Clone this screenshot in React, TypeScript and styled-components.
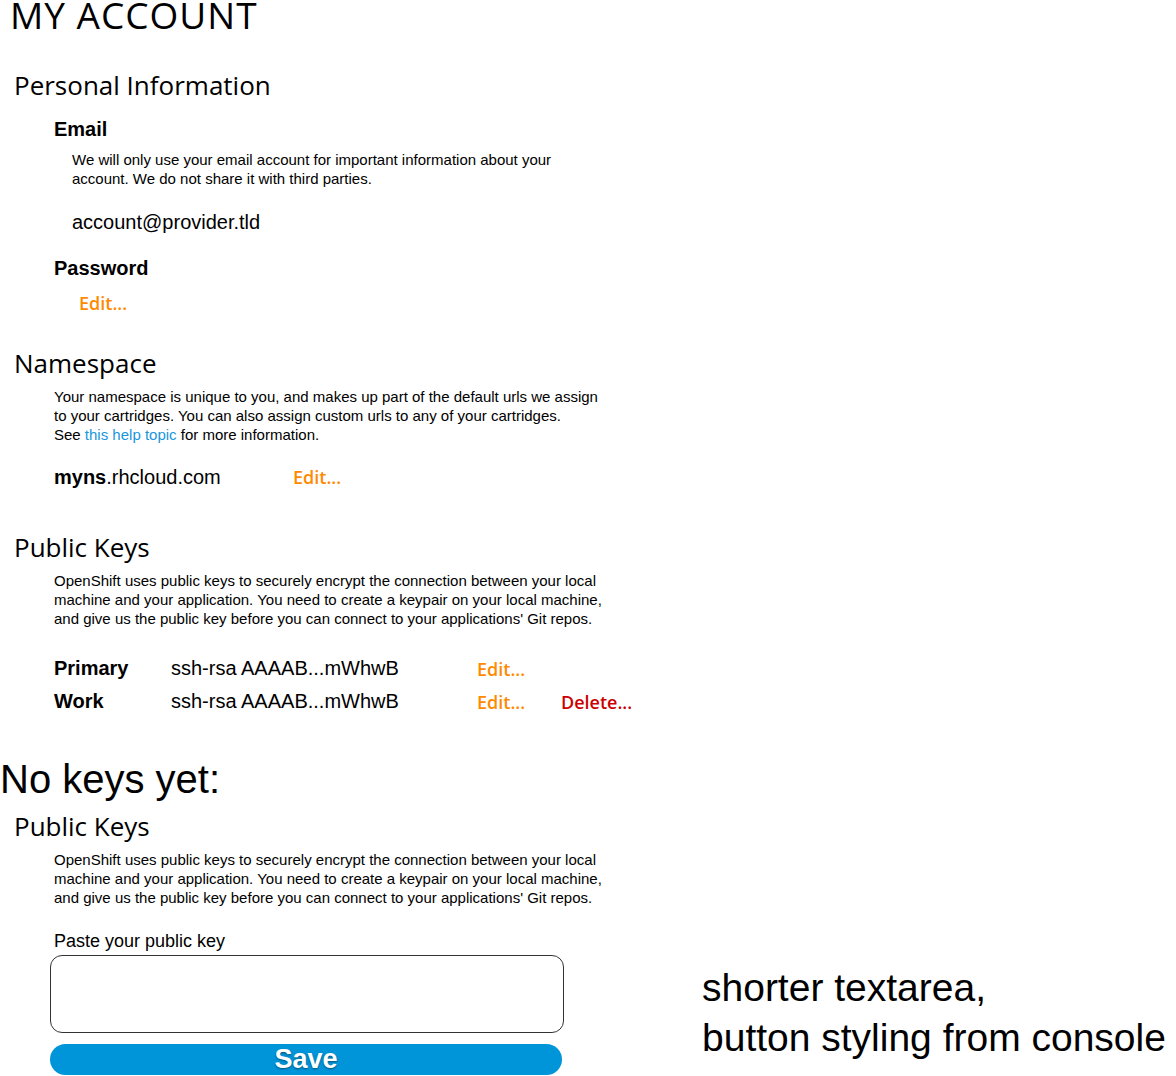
import React from 'react';
import styled, { createGlobalStyle } from 'styled-components';

const GlobalStyle = createGlobalStyle`
    html, body {
        margin: 0;
        padding: 0;
        background: #ffffff;
    }
    body {
        font-family: "Liberation Sans", Arial, sans-serif;
        color: #000;
    }
`

const HEAD_FONT = `"Open Sans", "Liberation Sans", sans-serif`;

const Page = styled.div`
    width: 1176px;
    height: 1076px;
    overflow: hidden;
    position: relative;
`

const PageTitle = styled.h1`
    font-family: ${HEAD_FONT};
    font-weight: 500;
    font-size: 37px;
    line-height: 30px;
    letter-spacing: 1px;
    margin: 0 0 0 10px;
    padding: 0;
`

const Section = styled.section<{ top: number }>`
    margin-top: ${p => p.top}px;
`

const SectionTitle = styled.h2`
    font-family: ${HEAD_FONT};
    font-weight: 500;
    font-size: 26px;
    line-height: 30px;
    margin: 0 0 0 14px;
`

const SectionBody = styled.div`
    padding-left: 54px;
`

const SubTitle = styled.h3<{ top: number }>`
    font-size: 20px;
    font-weight: bold;
    line-height: 24px;
    margin: ${p => p.top}px 0 0 0;
`

const Indented = styled.div`
    padding-left: 18px;
`

const Blurb = styled.p<{ top: number }>`
    font-size: 15px;
    line-height: 19px;
    margin: ${p => p.top}px 0 0 0;
    white-space: nowrap;
`

const HelpLink = styled.a`
    color: #1996dc;
    text-decoration: none;
`

const Value = styled.div<{ top: number }>`
    font-size: 20px;
    line-height: 24px;
    margin-top: ${p => p.top}px;
`

const ActionLink = styled.a<{ danger?: boolean }>`
    font-family: ${HEAD_FONT};
    font-size: 18px;
    font-weight: 600;
    line-height: 22px;
    color: ${p => p.danger ? '#cc0000' : '#ff8a00'};
    text-decoration: none;
    cursor: pointer;
`

const PasswordEdit = styled.div`
    margin-top: 12px;
    padding-left: 25px;
`

const NamespaceRow = styled.div`
    display: flex;
    align-items: baseline;
    margin-top: 21px;
    font-size: 20px;
    line-height: 24px;
`

const NamespaceValue = styled.span`
    width: 239px;
`

const KeyList = styled.div`
    display: grid;
    grid-template-columns: 117px 306px 84px auto;
    grid-auto-rows: 33px;
    align-items: center;
    margin-top: 24px;
    width: 600px;
`

const KeyName = styled.span`
    font-size: 20px;
    font-weight: bold;
`

const KeyValue = styled.span`
    font-size: 20px;
`

const Annotation = styled.div<{ top: number }>`
    font-size: 40px;
    line-height: 44px;
    margin-top: ${p => p.top}px;
`

const BottomRow = styled.div`
    display: flex;
    align-items: flex-start;
`

const KeyForm = styled.form`
    width: 514px;
    margin-left: 50px;
    margin-top: 23px;
`

const FieldLabel = styled.label`
    display: block;
    font-size: 18px;
    line-height: 22px;
    margin-left: 4px;
`

const KeyTextarea = styled.textarea`
    display: block;
    box-sizing: border-box;
    width: 514px;
    height: 78px;
    margin-top: 3px;
    border: 1px solid #333;
    border-radius: 12px;
    resize: none;
    outline: none;
    font-family: "Liberation Mono", monospace;
`

const SaveButton = styled.button`
    display: block;
    width: 512px;
    height: 31px;
    margin-top: 11px;
    border: none;
    border-radius: 16px;
    background: #0094d9;
    color: #fff;
    font-family: "Liberation Sans", Arial, sans-serif;
    font-weight: bold;
    font-size: 27px;
    line-height: 31px;
    padding: 0;
    text-shadow: 0 1px 2px rgba(0, 0, 0, 0.45);
    cursor: pointer;
`

const Note = styled.div`
    margin-left: 138px;
    margin-top: 56px;
    font-size: 39px;
    line-height: 50px;
    white-space: nowrap;
`

const keys = [
    { name: 'Primary', value: 'ssh-rsa AAAAB...mWhwB', deletable: false },
    { name: 'Work', value: 'ssh-rsa AAAAB...mWhwB', deletable: true },
];

const KeysIntro = ({ top }: { top: number }) => (
    <Blurb top={top}>
        OpenShift uses public keys to securely encrypt the connection between your local<br />
        machine and your application. You need to create a keypair on your local machine,<br />
        and give us the public key before you can connect to your applications' Git repos.
    </Blurb>
);

export default function App() {
    return (
        <Page>
            <GlobalStyle />
            <PageTitle>MY ACCOUNT</PageTitle>

            <Section top={40}>
                <SectionTitle>Personal Information</SectionTitle>
                <SectionBody>
                    <SubTitle top={17}>Email</SubTitle>
                    <Indented>
                        <Blurb top={9}>
                            We will only use your email account for important information about your<br />
                            account. We do not share it with third parties.
                        </Blurb>
                        <Value top={22}>account@provider.tld</Value>
                    </Indented>
                    <SubTitle top={22}>Password</SubTitle>
                    <PasswordEdit>
                        <ActionLink>Edit...</ActionLink>
                    </PasswordEdit>
                </SectionBody>
            </Section>

            <Section top={34}>
                <SectionTitle>Namespace</SectionTitle>
                <SectionBody>
                    <Blurb top={9}>
                        Your namespace is unique to you, and makes up part of the default urls we assign<br />
                        to your cartridges. You can also assign custom urls to any of your cartridges.<br />
                        See <HelpLink href="#">this help topic</HelpLink> for more information.
                    </Blurb>
                    <NamespaceRow>
                        <NamespaceValue><b>myns</b>.rhcloud.com</NamespaceValue>
                        <ActionLink>Edit...</ActionLink>
                    </NamespaceRow>
                </SectionBody>
            </Section>

            <Section top={43}>
                <SectionTitle>Public Keys</SectionTitle>
                <SectionBody>
                    <KeysIntro top={9} />
                    <KeyList>
                        {keys.map(k => (
                            <React.Fragment key={k.name}>
                                <KeyName>{k.name}</KeyName>
                                <KeyValue>{k.value}</KeyValue>
                                <ActionLink>Edit...</ActionLink>
                                {k.deletable ? <ActionLink danger>Delete...</ActionLink> : <span />}
                            </React.Fragment>
                        ))}
                    </KeyList>
                </SectionBody>
            </Section>

            <Annotation top={39}>No keys yet:</Annotation>

            <Section top={10}>
                <SectionTitle>Public Keys</SectionTitle>
                <SectionBody>
                    <KeysIntro top={9} />
                </SectionBody>
            </Section>

            <BottomRow>
                <KeyForm onSubmit={e => e.preventDefault()}>
                    <FieldLabel>Paste your public key</FieldLabel>
                    <KeyTextarea />
                    <SaveButton type="submit">Save</SaveButton>
                </KeyForm>
                <Note>
                    shorter textarea,<br />
                    button styling from console
                </Note>
            </BottomRow>
        </Page>
    );
}
